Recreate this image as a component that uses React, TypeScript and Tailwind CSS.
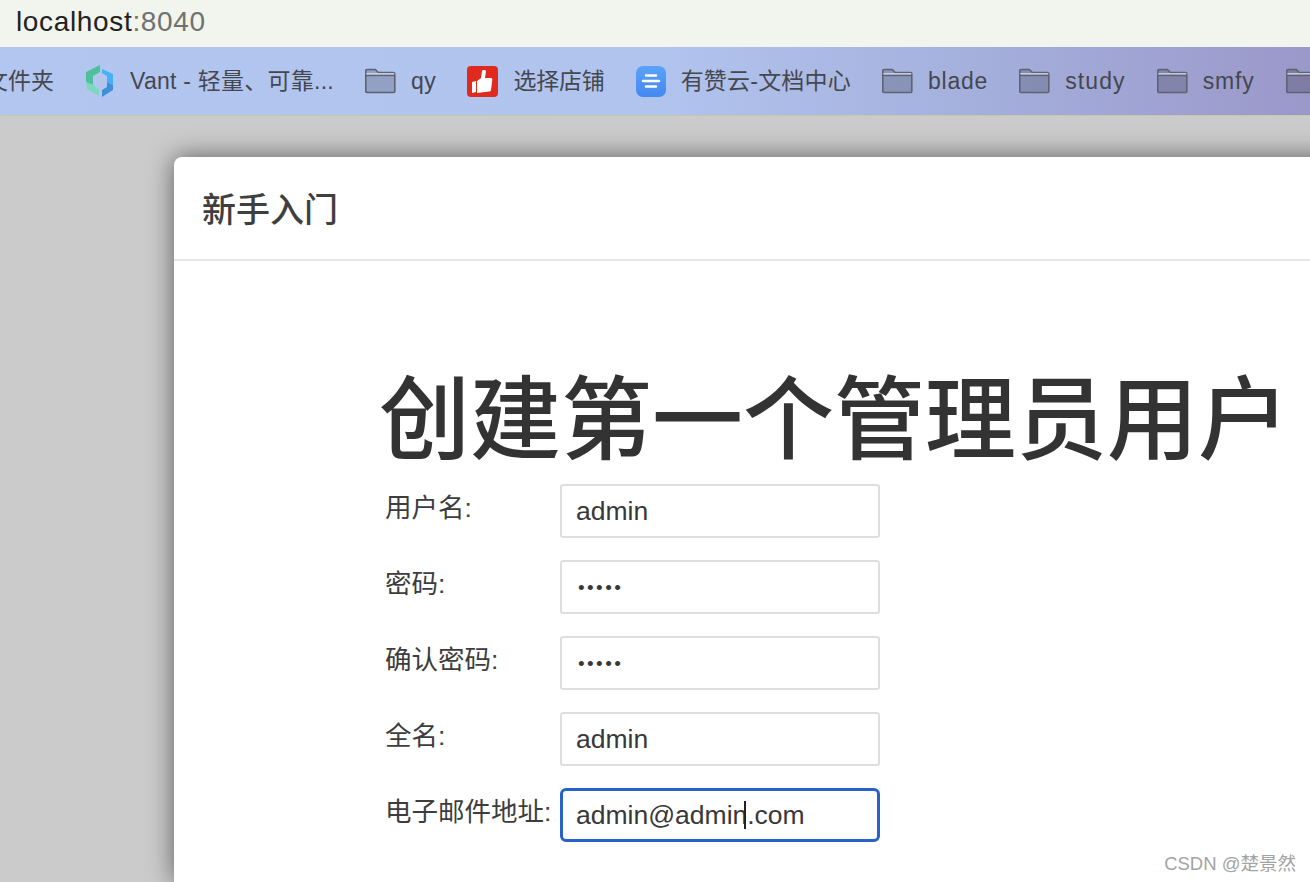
import type { ReactNode } from 'react'

const sans = '[font-family:"Liberation_Sans","Noto_Sans_CJK_SC",sans-serif]'

function FolderIcon() {
  return (
    <svg width="31" height="26" viewBox="0.7 0 31 26" className="shrink-0">
      <path d="M1.500 6V3a1.500 1.500 0 0 1 1.500-1.500h8l3 3h15a1.500 1.500 0 0 1 1.500 1.500v17.500a1 1 0 0 1-1 1H2.500a1 1 0 0 1-1-1z" fill="#000" fillOpacity="0.18" stroke="#5f6270" strokeWidth="1.600" />
      <path d="M1.500 7.500h29" stroke="#5f6270" strokeWidth="1.400" />
      <path d="M2 5.800h28" stroke="#d5dbef" strokeWidth="1.200" />
    </svg>
  )
}

function VantIcon() {
  return (
    <svg width="28" height="32" viewBox="0 0 28 32" className="shrink-0">
      <path d="M14 0v7L7 11v9l-7-3V7z" fill="#4fbf9c" />
      <path d="M0 17l7 3 6 4v7L1 24z" fill="#7fd6c0" />
      <path d="M16 4l11 5v11l-6-3V11l-5-3z" fill="#48b0f7" />
      <path d="M27 20v5l-11 7v-7l5-3v-5z" fill="#3f8fd8" />
    </svg>
  )
}

function ThumbIcon() {
  return (
    <svg width="31" height="31" viewBox="0 0 31 31" className="shrink-0">
      <rect width="31" height="31" rx="4" fill="#e0291f" />
      <path d="M5 16l4-1v11l-4 1z" fill="#fff" />
      <path d="M10 15l4-3 1-7c0-1 3-1.500 4 0l-1 7h6c1 0 1.500 1 1.300 2L24 24c-.2 1-1 1.500-2 1.500L10 27z" fill="#fff" />
    </svg>
  )
}

function DocsIcon() {
  return (
    <svg width="30" height="31" viewBox="0 0 30 31" className="shrink-0">
      <defs>
        <linearGradient id="docs-bg" x1="0" y1="0" x2="0" y2="1">
          <stop offset="0" stopColor="#5ba2f8" />
          <stop offset="1" stopColor="#4488f1" />
        </linearGradient>
      </defs>
      <rect width="30" height="31" rx="7" fill="url(#docs-bg)" />
      <path d="M10 9.500h10M7 15h16M10 20.500h10" stroke="#fff" strokeWidth="2.500" strokeLinecap="round" />
    </svg>
  )
}

function Bookmark({ icon, label, className }: { icon: ReactNode; label: string; className: string }) {
  return (
    <div className="flex items-center gap-[15px] shrink-0">
      {icon}
      <span className={`text-[23px] text-[#45474f] whitespace-nowrap ${className}`}>{label}</span>
    </div>
  )
}

function Field({ label, type = 'text', value, focused, caret }: {
  label: string
  type?: string
  value: string
  focused?: boolean
  caret?: boolean
}) {
  return (
    <div className="flex items-start">
      <label className="w-[175px] pt-[5px] text-[26.500px] leading-[38px] text-[#3d3d3d] whitespace-nowrap">{label}</label>
      <div className="relative w-[320px] h-[54px]">
        <input
          readOnly
          type={type}
          value={value}
          className={`w-full h-full bg-white outline-none text-[#383838] ${type === 'password' ? 'text-[19px] tracking-[2.400px] pt-[1px]' : 'text-[26.500px]'} ${focused
            ? 'border-[3px] border-[#2862c9] rounded-[6px] pl-[13px]'
            : type === 'password'
              ? 'border-2 border-[#dedede] rounded-[3px] pl-[16px]'
              : 'border-2 border-[#dedede] rounded-[3px] pl-[14px]'}`}
        />
        {caret && <span className="absolute left-[184px] top-[13px] w-[1.500px] h-[28px] bg-[#222]" />}
      </div>
    </div>
  )
}

export default function App() {
  return (
    <div className={`relative w-[1310px] h-[882px] overflow-hidden bg-[#cbcbcb] flex flex-col ${sans}`}>
      {/* address bar */}
      <div className="h-[47px] shrink-0 bg-[#f2f5ee] pl-[16px] pb-[4px] flex items-center text-[28px] tracking-[0.65px] text-[#222]">
        localhost<span className="text-[#6f716e]">:8040</span>
      </div>

      {/* bookmarks */}
      <div className="h-[69px] shrink-0 flex items-center gap-[31px] -ml-[15px] w-[1350px] border-b border-[#c3c9ac] bg-[linear-gradient(90deg,#b3c6ef_0%,#b1c4ee_50%,#a4aedb_75%,#9a96c8_100%)]">
        <span className="text-[23px] mr-[1px] text-[#45474f] whitespace-nowrap">文件夹</span>
        <Bookmark icon={<VantIcon />} label="Vant - 轻量、可靠..." className="ml-[1px] tracking-[0.25px]" />
        <Bookmark icon={<FolderIcon />} label="qy" className="tracking-[0.6px]" />
        <Bookmark icon={<ThumbIcon />} label="选择店铺" className="tracking-[-0.2px]" />
        <Bookmark icon={<DocsIcon />} label="有赞云-文档中心" className="tracking-[0.2px]" />
        <Bookmark icon={<FolderIcon />} label="blade" className="tracking-[0.8px]" />
        <Bookmark icon={<FolderIcon />} label="study" className="tracking-[1.1px]" />
        <Bookmark icon={<FolderIcon />} label="smfy" className="tracking-[0.85px]" />
        <FolderIcon />
      </div>

      {/* dialog */}
      <div className="mt-[41px] ml-[174px] w-[1300px] flex-1 bg-white rounded-tl-[8px] shadow-[0_0_26px_rgba(0,0,0,0.55)]">
        <div className="h-[104px] border-b-2 border-[#e6e6e6] pl-[28px] pt-[4px] flex items-center">
          <h4 className="text-[34px] font-medium text-[#3f3f3f]">新手入门</h4>
        </div>
        <div className="pl-[205px]">
          <h1 className="mt-[104px] text-[91px] leading-[112px] font-medium text-[#333] whitespace-nowrap">创建第一个管理员用户</h1>
          <div className="mt-[7px] pl-[6px] flex flex-col gap-[22px]">
            <Field label="用户名:" value="admin" />
            <Field label="密码:" type="password" value="admin" />
            <Field label="确认密码:" type="password" value="admin" />
            <Field label="全名:" value="admin" />
            <Field label="电子邮件地址:" value="admin@admin.com" focused caret />
          </div>
        </div>
      </div>

      {/* watermark */}
      <span className="absolute right-[14px] top-[850px] text-[18.500px] text-[#a3a3a3]">CSDN @楚景然</span>
    </div>
  )
}
